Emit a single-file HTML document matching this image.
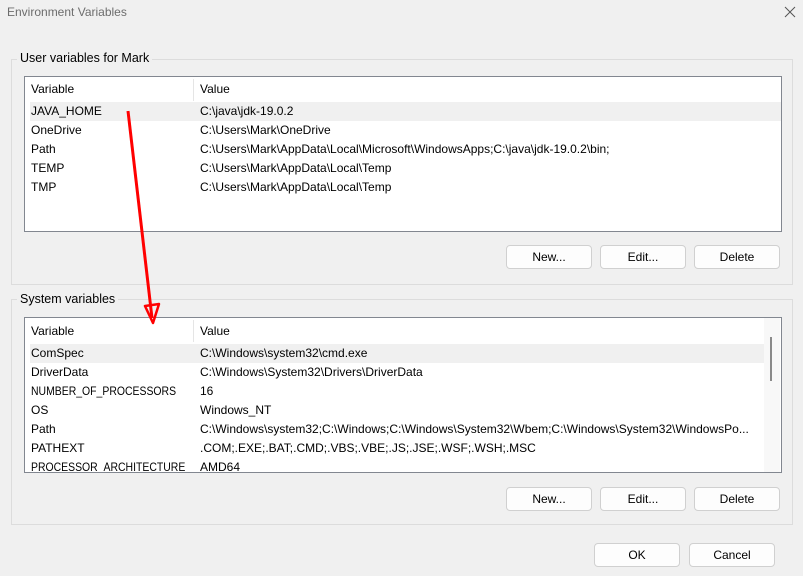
<!DOCTYPE html>
<html><head><style>
body{margin:0;width:803px;height:576px;background:#f0f0f0;font-family:"Liberation Sans",sans-serif;font-size:12px;color:#000;position:relative;overflow:hidden}
.abs{position:absolute}
.grp{position:absolute;border:1px solid #dcdcdc}
.lbl{position:absolute;background:#f0f0f0;padding:0 3px;font-size:12px}
.list{position:absolute;background:#fff;border:1px solid #828790;overflow:hidden}
.row{position:absolute;left:6px;height:19px;line-height:19px;white-space:nowrap}
.sq{transform:scaleX(0.87);transform-origin:left center}
.btn{position:absolute;width:84px;height:22px;border:1px solid #d0d0d0;border-radius:4px;background:#fdfdfd;text-align:center;line-height:22px;font-size:12px}
.hl{position:absolute;left:5px;right:0;height:19px;background:#f0f0f0}
</style></head><body>
<div class="abs" style="left:7px;top:5px;color:#6d6d6d;font-size:12px">Environment Variables</div>
<svg class="abs" style="left:784px;top:6px" width="12" height="12"><path d="M1 1L11 11M11 1L1 11" stroke="#555" stroke-width="1"/></svg>

<div class="grp" style="left:11px;top:59px;width:780px;height:224px"></div>
<div class="lbl" style="left:17px;top:51px;font-size:12.5px">User variables for Mark</div>
<div class="list" style="left:24px;top:76px;width:756px;height:154px">
 <div class="abs" style="left:168px;top:2px;width:1px;height:22px;background:#e5e5e5"></div>
 <div class="row" style="top:2px;line-height:20px">Variable</div>
 <div class="row" style="top:2px;left:175px;line-height:20px">Value</div>
 <div class="hl" style="top:25px"></div>
 <div class="row" style="top:25px">JAVA_HOME</div><div class="row" style="top:25px;left:175px">C:\java\jdk-19.0.2</div>
 <div class="row" style="top:44px">OneDrive</div><div class="row" style="top:44px;left:175px">C:\Users\Mark\OneDrive</div>
 <div class="row" style="top:63px">Path</div><div class="row" style="top:63px;left:175px">C:\Users\Mark\AppData\Local\Microsoft\WindowsApps;C:\java\jdk-19.0.2\bin;</div>
 <div class="row" style="top:82px">TEMP</div><div class="row" style="top:82px;left:175px">C:\Users\Mark\AppData\Local\Temp</div>
 <div class="row" style="top:101px">TMP</div><div class="row" style="top:101px;left:175px">C:\Users\Mark\AppData\Local\Temp</div>
</div>
<div class="btn" style="left:506px;top:245px">New...</div>
<div class="btn" style="left:600px;top:245px">Edit...</div>
<div class="btn" style="left:694px;top:245px">Delete</div>

<div class="grp" style="left:11px;top:299px;width:780px;height:224px"></div>
<div class="lbl" style="left:17px;top:292px;font-size:12.5px">System variables</div>
<div class="list" style="left:24px;top:317px;width:756px;height:154px">
 <div class="abs" style="left:168px;top:2px;width:1px;height:22px;background:#e5e5e5"></div>
 <div class="row" style="top:3px;line-height:20px">Variable</div>
 <div class="row" style="top:3px;left:175px;line-height:20px">Value</div>
 <div class="hl" style="top:26px;right:14px"></div>
 <div class="row" style="top:26px">ComSpec</div><div class="row" style="top:26px;left:175px">C:\Windows\system32\cmd.exe</div>
 <div class="row" style="top:45px">DriverData</div><div class="row" style="top:45px;left:175px">C:\Windows\System32\Drivers\DriverData</div>
 <div class="row sq" style="top:64px">NUMBER_OF_PROCESSORS</div><div class="row" style="top:64px;left:175px">16</div>
 <div class="row" style="top:83px">OS</div><div class="row" style="top:83px;left:175px">Windows_NT</div>
 <div class="row" style="top:102px">Path</div><div class="row" style="top:102px;left:175px">C:\Windows\system32;C:\Windows;C:\Windows\System32\Wbem;C:\Windows\System32\WindowsPo...</div>
 <div class="row" style="top:121px">PATHEXT</div><div class="row" style="top:121px;left:175px">.COM;.EXE;.BAT;.CMD;.VBS;.VBE;.JS;.JSE;.WSF;.WSH;.MSC</div>
 <div class="row sq" style="top:140px">PROCESSOR_ARCHITECTURE</div><div class="row" style="top:140px;left:175px">AMD64</div>
 <div class="abs" style="left:739px;top:0;width:16px;height:154px;background:#f8f8f8"></div>
 <div class="abs" style="left:745px;top:19px;width:2px;height:44px;background:#8a8a8a"></div>
</div>
<div class="btn" style="left:506px;top:487px">New...</div>
<div class="btn" style="left:600px;top:487px">Edit...</div>
<div class="btn" style="left:694px;top:487px">Delete</div>

<div class="btn" style="left:594px;top:543px">OK</div>
<div class="btn" style="left:689px;top:543px">Cancel</div>

<svg class="abs" style="left:0;top:0" width="803" height="576">
<path d="M128 111L152 318" stroke="#f00" stroke-width="3" fill="none"/>
<path d="M145 306L159 304L153 323Z" stroke="#f00" stroke-width="2.5" fill="none" stroke-linejoin="round"/>
</svg>
</body></html>
